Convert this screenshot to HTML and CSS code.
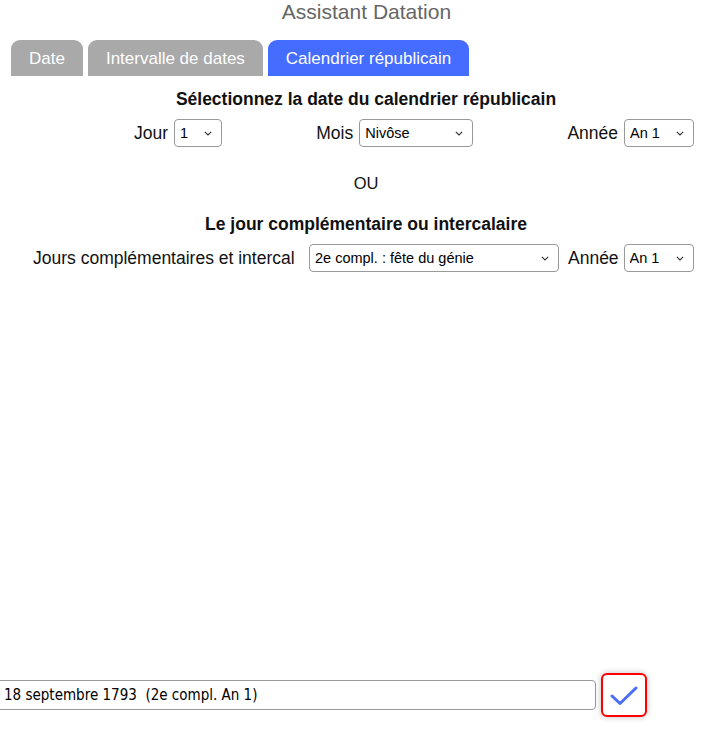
FILE: index.html
```html
<!DOCTYPE html>
<html lang="fr">
<head>
<meta charset="utf-8">
<title>Assistant Datation</title>
<link rel="stylesheet" href="styles.css">
</head>
<body>
<div class="page">
  <h1 class="title">Assistant Datation</h1>
  <nav class="tabs">
    <div class="tab">Date</div>
    <div class="tab">Intervalle de dates</div>
    <div class="tab active">Calendrier républicain</div>
  </nav>
  <main class="content">
    <h2 class="heading h-first">Sélectionnez la date du calendrier républicain</h2>
    <div class="row row-date">
      <label class="field">Jour
        <select class="sel sel-jour"><option>1</option></select>
      </label>
      <label class="field">Mois
        <select class="sel sel-mois"><option>Nivôse</option></select>
      </label>
      <label class="field">Année
        <select class="sel sel-annee"><option>An 1</option></select>
      </label>
    </div>
    <div class="ou">OU</div>
    <h2 class="heading h-second">Le jour complémentaire ou intercalaire</h2>
    <div class="row row-compl">
      <span class="compl-label">Jours complémentaires et intercal</span>
      <select class="sel sel-compl"><option>2e compl. : fête du génie</option></select>
      <label class="field field-tight">Année
        <select class="sel sel-annee"><option>An 1</option></select>
      </label>
    </div>
  </main>
  <footer class="footer">
    <input class="result" type="text" value="18 septembre 1793  (2e compl. An 1)">
    <button class="ok" type="button" aria-label="Valider">
      <svg width="28" height="20" viewBox="0 0 28 20"><path d="M2 10 L10 17.5 L26 2" fill="none" stroke="#4a6cf7" stroke-width="3" stroke-linecap="round" stroke-linejoin="round"/></svg>
    </button>
  </footer>
</div>
</body>
</html>
```
FILE: styles.css
```css
* { box-sizing: border-box; }
html, body { margin: 0; padding: 0; }
body {
  font-family: "Liberation Sans", Arial, sans-serif;
  color: #111;
  background: #fff;
}
.page {
  display: flex;
  flex-direction: column;
  min-height: 100vh;
}
.title {
  margin: 0;
  font-size: 21px;
  line-height: 24px;
  font-weight: normal;
  color: #666;
  text-align: center;
  padding-left: 28px;
}
.tabs {
  display: flex;
  gap: 5px;
  margin: 16px 0 0 11px;
}
.tab {
  height: 36px;
  line-height: 37px;
  padding: 0 18px;
  background: #a9a9a9;
  color: #fff;
  font-size: 17px;
  border-radius: 9px 9px 0 0;
}
.tab.active { background: #446cff; }
.content {
  margin-left: 33px;
  width: 666px;
}
.heading {
  margin: 0;
  font-size: 17.5px;
  line-height: 20px;
  font-weight: bold;
  text-align: center;
}
.h-first { margin-top: 13px; }
.h-second { margin-top: 21px; }
.row {
  display: flex;
  align-items: center;
  margin-top: 10px;
  font-size: 17.5px;
}
.row-date {
  justify-content: space-between;
  padding-left: 101px;
  padding-right: 5px;
}
.field {
  display: flex;
  align-items: center;
  gap: 6px;
}
.field-tight { gap: 5px; }
.sel {
  -webkit-appearance: none;
  appearance: none;
  height: 28px;
  font-family: "Liberation Sans", Arial, sans-serif;
  font-size: 14.5px;
  color: #000;
  border: 1px solid #999;
  border-radius: 4px;
  background: #fff url("data:image/svg+xml,%3Csvg xmlns='http://www.w3.org/2000/svg' width='8' height='5' viewBox='0 0 8 5'%3E%3Cpath d='M0.8 0.8 L4 4 L7.2 0.8' fill='none' stroke='%23333' stroke-width='1.1'/%3E%3C/svg%3E") no-repeat right 9px center;
  padding: 0 18px 0 5px;
}
.sel-jour { width: 48px; }
.sel-mois { width: 114px; }
.sel-annee { width: 70px; }
.sel-compl { width: 250px; margin-left: 15px; margin-right: 9px; }
.ou {
  margin-top: 26px;
  text-align: center;
  font-size: 16.5px;
  line-height: 20px;
}
.compl-label {
  width: 261px;
  white-space: nowrap;
}
.row-compl { padding-right: 5px; }
.footer {
  margin-top: auto;
  margin-bottom: 13px;
  display: flex;
  align-items: center;
  gap: 5px;
}
.result {
  width: 599px;
  margin-left: -3px;
  height: 30px;
  border: 1px solid #999;
  border-radius: 0 4px 4px 0;
  padding: 0 6px;
  font-family: "DejaVu Sans Condensed", "DejaVu Sans", sans-serif;
  font-stretch: condensed;
  font-size: 15px;
  color: #000;
  background: #fff;
}
.ok {
  width: 46px;
  height: 44px;
  border: 2px solid #f00;
  border-radius: 6px;
  background: #fff;
  box-shadow: 0 0 6px rgba(0,0,0,0.25);
  display: flex;
  align-items: center;
  justify-content: center;
  padding: 2px 0 0 0;
}
```
